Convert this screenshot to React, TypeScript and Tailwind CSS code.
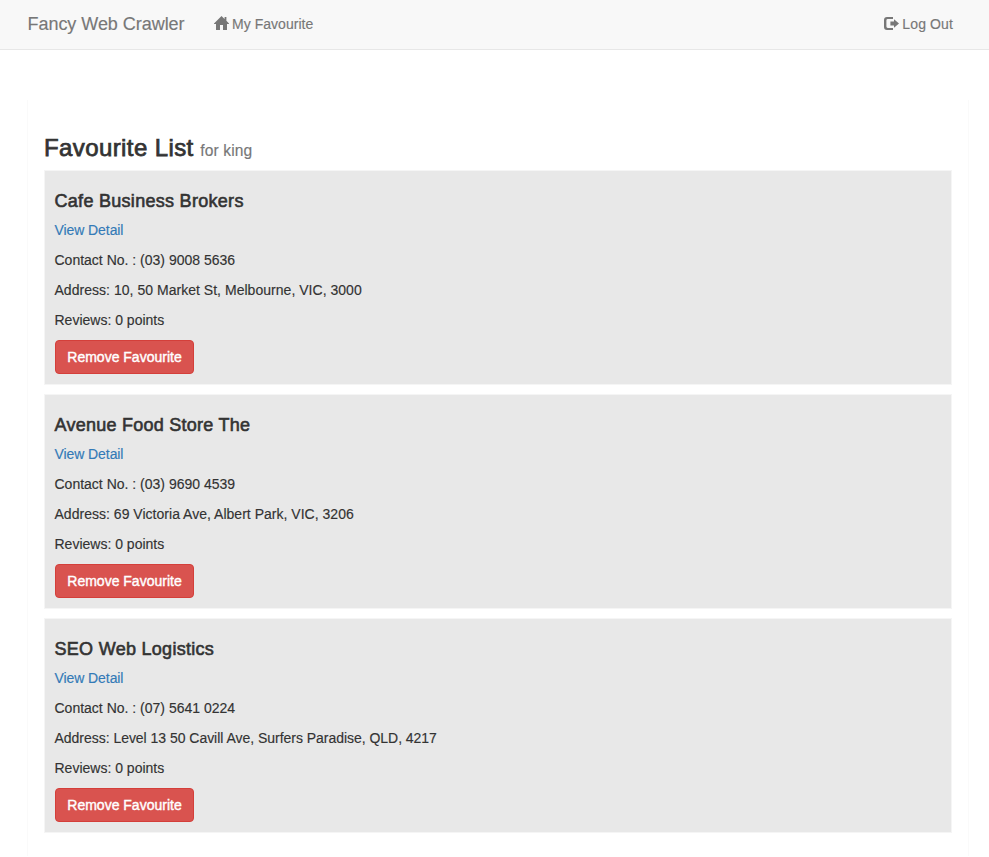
type Favourite = {
  name: string;
  phone: string;
  address: string;
  nameClass: string;
  addressClass: string;
};

const favourites: Favourite[] = [
  {
    name: "Cafe Business Brokers",
    phone: "(03) 9008 5636",
    address: "10, 50 Market St, Melbourne, VIC, 3000",
    nameClass: "tracking-[0.29px]",
    addressClass: "tracking-[0.03px]",
  },
  {
    name: "Avenue Food Store The",
    phone: "(03) 9690 4539",
    address: "69 Victoria Ave, Albert Park, VIC, 3206",
    nameClass: "tracking-[0.25px]",
    addressClass: "tracking-[0.02px]",
  },
  {
    name: "SEO Web Logistics",
    phone: "(07) 5641 0224",
    address: "Level 13 50 Cavill Ave, Surfers Paradise, QLD, 4217",
    nameClass: "tracking-[0.29px]",
    addressClass: "tracking-[-0.03px]",
  },
];

function HomeIcon() {
  return (
    <svg className="mr-[3px] mb-[3px] h-[14px] w-[15px]" viewBox="0 0 15 14" fill="currentColor">
      <path d="M7.5 0 L10.6 3 V1 H12.4 V4.8 L15 7.4 V8 H13 V14 H9 V9 H6 V14 H2 V8 H0 V7.4 Z" />
    </svg>
  );
}

function LogOutIcon() {
  return (
    <svg className="mr-[3px] h-[14px] w-[15px]" viewBox="0 0 15 14" fill="currentColor">
      <path d="M9 0 H3 Q0 0 0 3 V10 Q0 13 3 13 H9 V11 H3.8 Q2.4 11 2.4 9.6 V3.4 Q2.4 2 3.8 2 H9 Z" />
      <path d="M10 2.2 L15 6.5 L10 10.8 V8.4 H6.4 V4.6 H10 Z" />
    </svg>
  );
}

function Card({ item }: { item: Favourite }) {
  return (
    <article className="h-[215px] border border-[#f5f5f5] bg-[#e8e8e8] p-[10px] pb-0 pl-[9.5px]">
      <h4 className="mt-[11px] mb-[9px] h-[19px] text-[18px] leading-[19px]">
        <span className={`[-webkit-text-stroke:0.6px_#333] ${item.nameClass}`}>{item.name}</span>
      </h4>
      <p className="mb-[10px] leading-5 tracking-[-0.08px] text-[#337ab7]">
        <a>View Detail</a>
      </p>
      <p className="mb-[10px] leading-5">Contact No. : {item.phone}</p>
      <p className="mb-[10px] leading-5">
        <span className={item.addressClass}>Address: {item.address}</span>
      </p>
      <p className="mb-[10px] leading-5">Reviews: 0 points</p>
      <button className="ml-[0.5px] flex h-[34px] w-[139px] items-center justify-center rounded-[4px] border border-[#d43f3a] bg-[#d9534f] text-white">
        <span className="[-webkit-text-stroke:0.4px_white]">Remove Favourite</span>
      </button>
    </article>
  );
}

export default function App() {
  return (
    <div className="min-h-[857px] bg-white font-['Liberation_Sans',Arial,sans-serif] text-[14px] text-[#333] [-webkit-text-stroke:0.15px]">
      <nav className="flex h-[50px] items-center border-b border-[#e7e7e7] bg-[#f8f8f8] pr-[36px] pl-[27.5px] text-[#777]">
        <a className="w-[186.5px] pb-[2px] text-[18px] leading-5 tracking-[-0.04px]">Fancy Web Crawler</a>
        <a className="flex items-center pb-[1px] leading-5">
          <HomeIcon />
          <span className="tracking-[0.03px]">My Favourite</span>
        </a>
        <a className="ml-auto flex items-center pb-[1px] leading-5">
          <LogOutIcon />
          <span className="tracking-[0.12px]">Log Out</span>
        </a>
      </nav>
      <main className="mt-[50px] mr-[20px] ml-[27px] h-[756px] border-x border-[#fafafa] px-[16px] pt-[35px]">
        <h3 className="mb-[9px] h-[26px] text-[24px] leading-[26px]">
          <span className="tracking-[0.4px] [-webkit-text-stroke:0.75px_#333]">Favourite List</span>{" "}
          <small className="text-[15.6px] tracking-[0.1px] text-[#777]">for king</small>
        </h3>
        <div className="flex flex-col gap-[9px]">
          {favourites.map((item) => (
            <Card key={item.name} item={item} />
          ))}
        </div>
      </main>
    </div>
  );
}
